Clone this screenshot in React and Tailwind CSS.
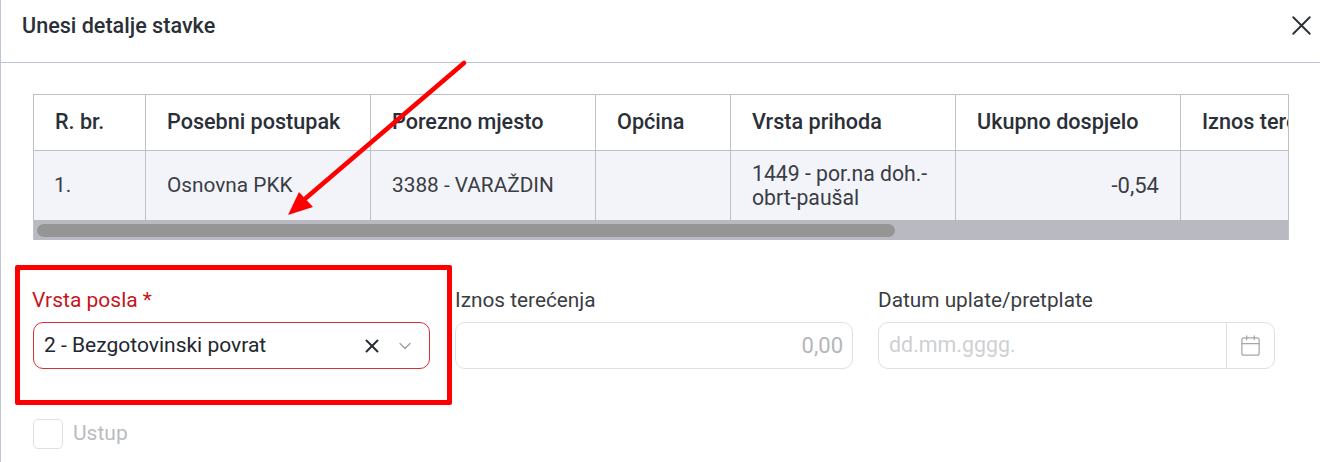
import React from 'react'
import { X, ChevronDown, Calendar } from 'lucide-react'

const columns = [
  { label: 'R. br.', width: 'w-[112px]' },
  { label: 'Posebni postupak', width: 'w-[225px]' },
  { label: 'Porezno mjesto', width: 'w-[225px]' },
  { label: 'Općina', width: 'w-[135px]' },
  { label: 'Vrsta prihoda', width: 'w-[225px]' },
  { label: 'Ukupno dospjelo', width: 'w-[225px]' },
  { label: 'Iznos terećenja', width: 'w-[225px]' },
]

const cellClass = 'shrink-0 border-r border-[#bfc0c7] px-[21px] flex items-center'

const App = () => {
  return (
    <div className="relative w-[1320px] h-[462px] overflow-hidden bg-white border-l border-[#bcc5d3] text-[#2b2f38] font-['Roboto',sans-serif]">
      {/* Header */}
      <div className="h-[63px] border-b border-[#bcc5d3] pl-[21px] pr-[2px] pt-[12px] flex justify-between items-start">
        <h1 className="text-[21.6px] leading-[28px] font-medium">Unesi detalje stavke</h1>
        <X size={33} strokeWidth={1.4} className="mt-[-3px]" />
      </div>

      {/* Table */}
      <div className="ml-[32px] mt-[31px] w-[1256px] overflow-hidden border-t border-l border-r border-[#bfc0c7]">
        <div className="flex h-[56px] w-max border-b border-[#bfc0c7] text-[21.6px] font-medium">
          {columns.map((col) => (
            <div key={col.label} className={`${cellClass} ${col.width}`}>
              <span className="whitespace-nowrap">{col.label}</span>
            </div>
          ))}
        </div>
        <div className="flex h-[69px] w-max bg-[#f3f4fa] text-[20.8px] text-[#3a3d44]">
          <div className={`${cellClass} w-[112px] pl-[20px]`}>1.</div>
          <div className={`${cellClass} w-[225px]`}>Osnovna PKK</div>
          <div className={`${cellClass} w-[225px]`}>3388 - VARAŽDIN</div>
          <div className={`${cellClass} w-[135px]`}></div>
          <div className={`${cellClass} w-[225px] leading-[24px] text-[21.2px]`}>1449 - por.na doh.-<br />obrt-paušal</div>
          <div className={`${cellClass} w-[225px] justify-end text-[22px]`}>-0,54</div>
          <div className={`${cellClass} w-[225px]`}></div>
        </div>
        {/* Scrollbar */}
        <div className="h-[20px] bg-[#b9b9c2] pt-[4px] pl-[3px]">
          <div className="h-[13px] w-[858px] rounded-full bg-[#959595]"></div>
        </div>
      </div>

      {/* Form */}
      <div className="ml-[32px] mt-[46px] flex gap-[25px]">
        <div className="w-[397px]">
          <label className="block h-[28px] -ml-[1px] text-[21px] leading-[28px] text-[#c4161c]">Vrsta posla *</label>
          <div className="mt-[8px] h-[47px] rounded-[10px] border border-[#d5303a] flex items-center pl-[10px] pr-[14px]">
            <span className="flex-1 text-[21px] text-[#22262e]">2 - Bezgotovinski povrat</span>
            <X size={22} strokeWidth={2.2} className="text-[#2b2f38] mr-[12px]" />
            <ChevronDown size={20} strokeWidth={1.5} className="text-[#9a9da3]" />
          </div>
        </div>
        <div className="w-[398px]">
          <label className="block h-[28px] text-[20.8px] leading-[28px] text-[#3a3d44]">Iznos terećenja</label>
          <div className="mt-[8px] h-[47px] rounded-[10px] border border-[#dfe0e3] flex items-center justify-end pr-[9px] text-[22px] text-[#b4b6ba]">0,00</div>
        </div>
        <div className="w-[397px]">
          <label className="block h-[28px] text-[20.8px] leading-[28px] text-[#3a3d44]">Datum uplate/pretplate</label>
          <div className="mt-[8px] h-[47px] rounded-[10px] border border-[#dfe0e3] flex items-center">
            <span className="flex-1 pl-[10px] text-[21.4px] text-[#cfd0d3]">dd.mm.gggg.</span>
            <div className="w-[48px] h-full border-l border-[#dfe0e3] flex items-center justify-center">
              <Calendar size={23} strokeWidth={1.3} className="text-[#a4a6aa]" />
            </div>
          </div>
        </div>
      </div>

      {/* Checkbox */}
      <div className="ml-[32px] mt-[49px] flex items-center gap-[10px]">
        <div className="w-[30px] h-[30px] rounded-[5px] border border-[#dfe0e3]"></div>
        <span className="text-[21px] text-[#b9bcc2]">Ustup</span>
      </div>

      {/* Red highlight and arrow */}
      <div className="absolute left-[14px] top-[265px] w-[437px] h-[140px] border-[5px] border-[#fe0000] rounded-[2px]"></div>
      <svg className="absolute left-[-1px] top-0" width="1320" height="462" fill="none">
        <line x1="464" y1="63" x2="306" y2="198" stroke="#fe0000" strokeWidth="4.6" strokeLinecap="round" />
        <polygon points="288,215 299,192 313,207" fill="#fe0000" />
      </svg>
    </div>
  )
}

export default App
